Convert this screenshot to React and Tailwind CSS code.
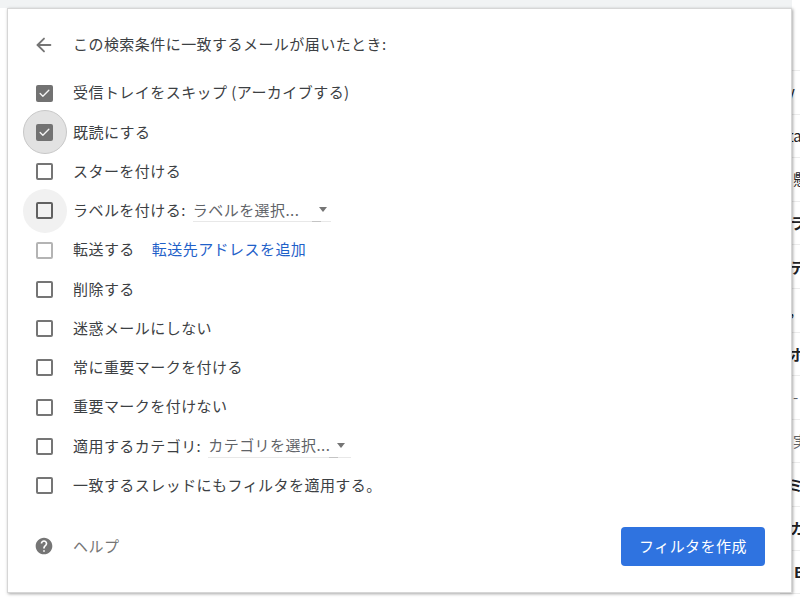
import { ArrowLeft, Check } from 'lucide-react';

const font = { fontFamily: '"Noto Sans CJK JP", "Liberation Sans", sans-serif' };

// list behind the dialog, only the last few pixels of each row show
const bgRows = [
  { text: 'y', cls: 'pl-[7px] text-[#202124]' },
  { text: 'ta', cls: 'pl-[8px] text-[#202124]' },
  { text: '懸', cls: 'pl-[13px] text-[#202124]' },
  { text: 'ラ', cls: 'pl-[10px] text-[#202124] font-bold' },
  { text: 'デ', cls: 'pl-[10px] text-[#202124] font-bold' },
  { text: ', ト', cls: 'pl-[10px] text-[#202124]' },
  { text: 'ボ', cls: 'pl-[10px] text-[#202124] font-bold' },
  { text: '-', cls: 'pl-[13px] text-[#5f6368]' },
  { text: '実', cls: 'pl-[13px] text-[#5f6368]' },
  { text: 'ミ', cls: 'pl-[8px] text-[#202124] font-bold' },
  { text: 'カ', cls: 'pl-[10px] text-[#202124] font-bold' },
  { text: 'B', cls: 'pl-[14px] text-[#202124] font-bold' },
];

function Box({ checked, light, dark }) {
  if (checked) {
    return (
      <span className="w-[17px] h-[17px] rounded-[2px] bg-[#727272] flex items-center justify-center">
        <Check size={13} strokeWidth={2.5} className="text-[#f4f4f4]" />
      </span>
    );
  }
  const border = light ? 'border-[#b4b4b4]' : dark ? 'border-[#616161]' : 'border-[#757575]';
  return <span className={`w-[17px] h-[17px] rounded-[2px] border-2 ${border}`} />;
}

function Row({ checked, light, halo, children }) {
  return (
    <div className="h-[39.25px] flex items-center">
      <div className="relative w-[65px] h-full flex items-center justify-center shrink-0">
        {halo === 'active' && (
          <span className="absolute left-[15px] top-[-2px] w-[44px] h-[44px] rounded-full bg-[#e2e2e2] border border-[#c8c8c8]" />
        )}
        {halo === 'hover' && (
          <span className="absolute left-[15px] top-[-2px] w-[44px] h-[44px] rounded-full bg-[#f1f1f1]" />
        )}
        <span className="relative ml-[7px] mt-[1px] flex">
          <Box checked={checked} light={light} dark={halo === 'hover'} />
        </span>
      </div>
      <div className="flex items-center text-[15px] tracking-[0.45px] text-[#3c4043] whitespace-nowrap">{children}</div>
    </div>
  );
}

function Select({ width, nub, children }) {
  return (
    <span className="relative ml-[7px] flex items-center h-[24px] border-b border-[#e8e8e8] text-[#5f6368]" style={{ width }}>
      {children}
      <span className={`absolute top-[9px] w-0 h-0 border-x-[4px] border-x-transparent border-t-[5px] border-t-[#757575] ${nub ? 'right-[6px]' : 'right-[4px]'}`} />
      <span className={`absolute bottom-[-1px] w-[9px] h-[1px] bg-[#c4c4c4] ${nub ? 'right-[13px]' : 'right-[10px]'}`} />
    </span>
  );
}

export default function App() {
  return (
    <div className="relative w-[800px] h-[602px] overflow-hidden bg-white" style={font}>
      <div className="h-[8px] w-[792px] bg-[#f1f3f4]" />
      <div className="mt-[62px] ml-[780px] border-t border-[#ececec] text-[15px] leading-[20px]">
        {bgRows.map((r, i) => (
          <div key={i} className={`h-[43.6px] flex items-center border-b border-[#ececec] overflow-hidden whitespace-nowrap ${r.cls}`}>
            <span>{r.text}</span>
          </div>
        ))}
      </div>

      <div className="absolute left-[7px] top-[8px] w-[785px] h-[585px] bg-white border border-[#d6d6d6] shadow-[1px_1px_3px_rgba(0,0,0,0.35)]">
        <div className="flex items-center h-[72px] pb-[1px]">
          <div className="w-[65px] flex justify-center pl-[7px]">
            <ArrowLeft size={22} strokeWidth={2} className="text-[#757575]" />
          </div>
          <span className="text-[15px] tracking-[0.45px] text-[#3c4043] whitespace-nowrap">この検索条件に一致するメールが届いたとき:</span>
        </div>
        <div className="mt-[-8px]">
          <Row checked>受信トレイをスキップ (アーカイブする)</Row>
          <Row checked halo="active">既読にする</Row>
          <Row>スターを付ける</Row>
          <Row halo="hover">
            ラベルを付ける:
            <Select width={138}>ラベルを選択...</Select>
          </Row>
          <Row light>
            転送する
            <a className="ml-[17px] text-[#1f61c9]" href="#">転送先アドレスを追加</a>
          </Row>
          <Row>削除する</Row>
          <Row>迷惑メールにしない</Row>
          <Row>常に重要マークを付ける</Row>
          <Row>重要マークを付けない</Row>
          <Row>
            適用するカテゴリ:
            <Select width={143} nub>カテゴリを選択...</Select>
          </Row>
          <Row>一致するスレッドにもフィルタを適用する。</Row>
        </div>
        <div className="flex items-center justify-between mt-[22px] pr-[26px]">
          <div className="flex items-center">
            <div className="w-[65px] flex justify-center pl-[7px]">
              <svg width="20" height="20" viewBox="0 0 24 24" fill="#757575">
                <path d="M12 2C6.48 2 2 6.48 2 12s4.48 10 10 10 10-4.48 10-10S17.52 2 12 2zm1 17h-2v-2h2v2zm2.07-7.75l-.9.92C13.45 12.9 13 13.5 13 15h-2v-.5c0-1.1.45-2.1 1.17-2.83l1.24-1.26c.37-.36.59-.86.59-1.41 0-1.1-.9-2-2-2s-2 .9-2 2H8c0-2.21 1.79-4 4-4s4 1.79 4 4c0 .88-.36 1.68-.93 2.25z" />
              </svg>
            </div>
            <span className="text-[15px] tracking-[0.45px] text-[#757575]">ヘルプ</span>
          </div>
          <button className="w-[144px] h-[39px] rounded-[4px] bg-[#2f73e0] text-white text-[15px] tracking-[0.45px]">フィルタを作成</button>
        </div>
      </div>
    </div>
  );
}
